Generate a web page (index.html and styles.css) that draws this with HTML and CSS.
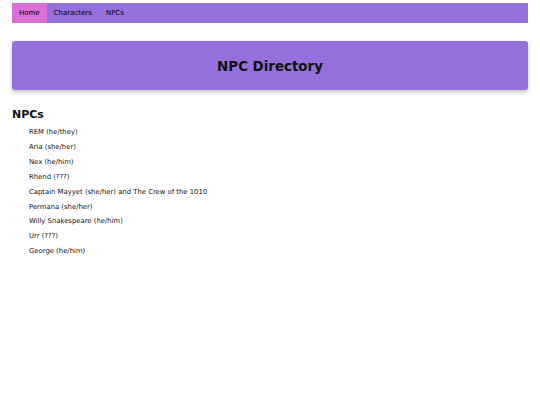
FILE: index.html
```html
<!DOCTYPE html>
<html lang="en">
<head>
    <meta charset="UTF-8">
    <meta name="viewport" content="width=device-width, initial-scale=1.0">
    <title>NPC Directory</title>
    <link rel="stylesheet" href="styles.css">
</head>
<body>

    <!-- Barra de navegación -->
    <ul class="nav">
        <li><a class="activo" href="#">Home</a></li>
        <li><a href="#">Characters</a></li>
        <li><a href="#">NPCs</a></li>
    </ul>

    <!-- Encabezado -->
    <div class="cabecera">
        <h1>NPC Directory</h1>
    </div>

    <h2>NPCs</h2>
    <ul class="lista">
        <li>REM (he/they)</li>
        <li>Aria (she/her)</li>
        <li>Nex (he/him)</li>
        <li>Rhend (???)</li>
        <li>Captain Mayyet (she/her) and The Crew of the 1010</li>
        <li>Permana (she/her)</li>
        <li>Willy Snakespeare (he/him)</li>
        <li>Urr (???)</li>
        <li>George (he/him)</li>
    </ul>

</body>
</html>
```

FILE: styles.css
```css
body {
    font-family: "DejaVu Sans", Verdana, sans-serif;
    margin: 0;
    padding: 3px 12px;
    background-color: #fff;
    color: #111;
}

.nav {
    list-style: none;
    margin: 0;
    padding: 0;
    display: flex;
    background-color: #9370db;
    height: 20px;
}

.nav a {
    display: block;
    height: 20px;
    line-height: 20px;
    padding: 0 7px;
    font-size: 7px;
    color: #000;
    text-decoration: none;
}

.nav a.activo {
    background-color: #da70d6;
}

.cabecera {
    background-color: #9370db;
    margin-top: 18px;
    height: 49px;
    border-radius: 3px;
    box-shadow: 0px 2px 4px rgba(0, 0, 0, 0.25);
    display: flex;
    justify-content: center;
    align-items: center;
}

.cabecera h1 {
    margin: 0;
    padding-top: 2px;
    font-size: 13.4px;
}

h2 {
    margin: 18px 0 4px 0;
    font-size: 11px;
}

.lista {
    list-style: none;
    margin: 0;
    padding-left: 17px;
}

.lista li {
    font-size: 6.85px;
    line-height: 14.9px;
}
```
